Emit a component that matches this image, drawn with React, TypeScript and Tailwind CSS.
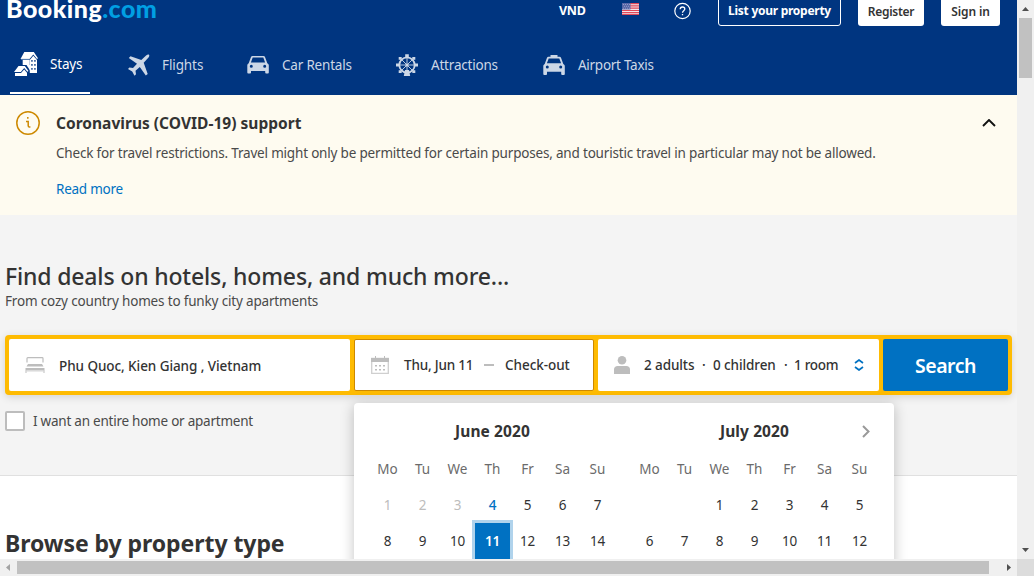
import React from "react";

const days = ["Mo", "Tu", "We", "Th", "Fr", "Sa", "Su"];

function StaysIcon() {
  return (
    <svg width="24" height="26" viewBox="0 0 24 26" fill="#fff">
      <path d="M10.300 1H19.800l4.200 6.200-1 .8-3.700-4.500L15.500 8H6.500z" />
      <path d="M8.700 8.800h7v5.200H8.700z" fill="#fff" />
      <path fillRule="evenodd" d="M19.300 4.800l3.700 4.300V22h-7.200V9.100zM17.300 9h1.300v1.800h-1.300zM20.300 9h1.300v1.800h-1.300zM17.300 13h1.300v1.800h-1.300zM20.300 13h1.300v1.800h-1.300zM17.300 17h1.300v1.800h-1.300zM20.300 17h1.300v1.800h-1.300z" />
      <path d="M12.500 14h3.500v5.500z" />
      <path d="M7 8.300h8.800" stroke="#6c90bf" strokeWidth=".8" />
      <path d="M4.500 15h6.300l3.700 5-1.100.7-3.200-3.600L6.800 21H0z" />
      <path d="M1 22h6l3.200-3.500L13 21.700V25H1z" />
    </svg>
  );
}
function FlightIcon() {
  return (
    <svg width="22" height="22" viewBox="0 0 22 22" fill="#ccd7e6">
      <path d="M20.800.5c.8.600.6 1.900-.3 3L15.700 8.800 19.700 20l-1.900 1.500-6-8.600-4.300 3.900.5 3.400-1.500 1.500-2.300-4.300L0 15l1.400-1.400 3.600.400 4-4.200L.8 4l1.700-1.700L13.300 6l4.800-4.400C19 .7 20.100.2 20.800.5z" />
    </svg>
  );
}
function CarIcon({ taxi = false }: { taxi?: boolean }) {
  return (
    <svg width="22" height="20" viewBox="0 0 22 20" fill="#ccd7e6">
      {taxi && <path d="M7.500 0h7v2h-7z" />}
      <path fillRule="evenodd" d={taxi ? "M5.500 1.800h11c.8 0 1.300.4 1.600 1.200L20.300 9c1 .6 1.500 1.300 1.500 2.300V19c0 .6-.3.900-.9.900h-1.800c-.5 0-.9-.3-.9-.9v-2.200H4V19c0 .6-.3.900-.9.900H1.200c-.6 0-.9-.3-.9-.9v-7.700c0-1 .5-1.700 1.400-2.300L3.900 3c.3-.8.8-1.200 1.600-1.200zm.2 1.700L3.900 8.200h14.200l-1.800-4.700zM4.300 10.500a1.500 1.500 0 100 3 1.500 1.500 0 000-3zm13.400 0a1.500 1.500 0 100 3 1.500 1.500 0 000-3z" : "M5.500 1.100h11c.8 0 1.300.4 1.600 1.200l2.200 6c1 .6 1.500 1.300 1.500 2.300v7c0 .6-.3.900-.9.900h-1.800c-.5 0-.9-.3-.9-.9v-1.500H4v1.500c0 .6-.3.900-.9.900H1.200c-.6 0-.9-.3-.9-.9v-7c0-1 .5-1.700 1.400-2.300l2.200-6c.3-.8.8-1.200 1.600-1.200zm.2 1.500L3.900 7.600h14.200l-1.800-5zM4.300 9.800a1.500 1.500 0 100 3 1.500 1.500 0 000-3zm13.400 0a1.500 1.500 0 100 3 1.500 1.500 0 000-3z"} />
    </svg>
  );
}
function WheelIcon() {
  return (
    <svg width="22" height="22" viewBox="0 0 22 22" fill="none" stroke="#ccd7e6">
      <circle cx="11" cy="11" r="7.700" strokeWidth="1.800" />
      <path strokeWidth=".9" d="M11 3v16M3 11h16M5.300 5.300l11.400 11.400M16.700 5.300L5.300 16.700" />
      <g fill="#ccd7e6" stroke="none">
        <circle cx="11" cy="11" r="1.600" />
        <path d="M9.200.300h3.600v3.200H9.200zM0 9.400h3.300v3.200H0zM18.700 9.400H22v3.200h-3.300zM2.700 3h3v2.800h-3zM16.300 3h3v2.800h-3zM2.700 16.200h3V19h-3zM16.300 16.200h3V19h-3zM9 16h4l1.200 6H7.800z" />
      </g>
    </svg>
  );
}
function Flag() {
  return (
    <svg width="17" height="12" viewBox="0 0 17 12">
      <path fill="#f3e4e8" d="M0 0h17v12H0z" />
      <path stroke="#e0485a" strokeWidth="1.200" d="M0 .6h17M0 2.900h17M0 5.200h17M0 7.500h17M0 9.600h17M0 11.500h17" />
      <path fill="#5866a8" d="M0 0h8.500v6.500H0z" />
      <path stroke="#a2a9d1" strokeDasharray="1 1" d="M1 1.500h7M2 3.300h6M1 5.200h7" strokeWidth=".8" />
    </svg>
  );
}
function BedIcon() {
  return (
    <svg width="20" height="16" viewBox="0 0 20 16" fill="#bdbdbd">
      <path d="M2 5.500V1.500c0-.5.3-.8.8-.8h14.400c.5 0 .8.300.8.800v4" fill="none" stroke="#bdbdbd" strokeWidth="1.200" />
      <path d="M3 7h14l1.500 2.500h-17zM.5 11h19v2.600H.5zM.5 13h1v3h-1zM18.500 13h1v3h-1z" />
      <path d="M1 14h18" stroke="#d6d6d6" />
    </svg>
  );
}
function CalendarIcon() {
  return (
    <svg width="18" height="18" viewBox="0 0 18 18" fill="#bdbdbd">
      <path d="M.7 2.500h16.600v14.800H.7z" fill="none" stroke="#cfcfcf" strokeWidth="1.300" />
      <path d="M0 2h18v4H0zM4 0h1v3H4zM13 0h1v3h-1zM4 9h2v1.500H4zM8 9h2v1.500H8zM12 9h2v1.500h-2zM4 13h2v1.500H4zM8 13h2v1.500H8zM12 13h2v1.500h-2z" />
    </svg>
  );
}

type MonthProps = { title: string; rows: string[][] };
function Month({ title, rows }: MonthProps) {
  return (
    <div className="w-[245px]">
      <h3 className="h-14 text-center text-[15.500px] font-bold leading-[56px] tracking-[0.1px] text-[#333]">{title}</h3>
      <div className="grid grid-cols-7 text-center text-[13.500px] leading-5 text-[#6b6b6b]">
        {days.map((d) => <span key={d}>{d}</span>)}
      </div>
      <div className="mt-2 grid grid-cols-7 text-center text-[13.500px] leading-9 tracking-[-0.3px] text-[#333]">
        {rows.flat().map((d, i) => {
          const june = title === "June 2020";
          if (june && d === "11") return <span key={i} className="h-9 bg-[#0071c2] font-semibold text-white outline-3 outline-[#b0d3ec]">{d}</span>;
          if (june && i < 3) return <span key={i} className="h-9 text-[#bdbdbd]">{d}</span>;
          if (june && d === "4") return <span key={i} className="h-9 font-medium text-[#0071c2]">{d}</span>;
          return <span key={i} className="h-9">{d}</span>;
        })}
      </div>
    </div>
  );
}

export default function App() {
  return (
    <div className="grid h-[576px] w-[1034px] grid-cols-[1017px_17px] grid-rows-[559px_17px] overflow-hidden bg-[#f0f0f0] font-['Noto_Sans',sans-serif] text-[#333]">
      <main className="overflow-hidden bg-white">
        <header className="h-[95px] overflow-hidden bg-[#003580] text-white">
          <div className="flex h-[34px] items-start">
            <div className="-mt-px ml-[6px] w-[553px] whitespace-nowrap font-['Lato',sans-serif] text-[25px] font-black leading-[18px] tracking-[0.47px]">
              Booking<span className="text-[#009fe3]">.com</span>
            </div>
            <span className="w-[63px] pt-px text-[12.500px] font-bold leading-5 tracking-[-0.3px]">VND</span>
            <span className="mt-[3px] w-[52px]"><Flag /></span>
            <svg className="mt-[2px]" width="17" height="18" viewBox="0 0 17 18" fill="none" stroke="#fff">
              <circle cx="8.500" cy="9" r="7.700" strokeWidth="1.200" />
              <path strokeWidth="1.300" d="M6.200 7.300c0-1.500 1-2.300 2.300-2.300s2.300.8 2.300 2c0 1.700-2.300 1.700-2.300 3.700M8.500 12v1.300" />
            </svg>
            <button className="-mt-2 ml-[27px] h-[34px] w-[123px] whitespace-nowrap rounded-[3px] border border-white pt-[4px] text-[12px] font-bold leading-4 tracking-[-0.27px]">List your property</button>
            <button className="-mt-2 ml-[17px] h-[34px] w-[66px] whitespace-nowrap rounded-[3px] bg-white pt-[6px] text-[12px] font-semibold tracking-[-0.3px] text-[#333]">Register</button>
            <button className="-mt-2 ml-[17px] h-[34px] w-[59px] whitespace-nowrap rounded-[3px] bg-white pt-[6px] text-[12px] font-semibold tracking-[-0.1px] text-[#333]">Sign in</button>
          </div>
          <nav className="flex h-[60px] whitespace-nowrap pt-px text-[13.500px] leading-[58px] tracking-[-0.2px] text-[#ccd7e6]">
            <a className="ml-[10px] flex w-[80px] items-center border-b-2 border-white pl-[4px] leading-[58px] text-white"><span className="mr-[12px]"><StaysIcon /></span>Stays</a>
            <a className="flex w-[120px] items-center pl-[38px] tracking-[-0.1px]"><span className="mr-[12px]"><FlightIcon /></span>Flights</a>
            <a className="flex w-[150px] items-center pl-[37px]"><span className="mr-[13px]"><CarIcon /></span>Car Rentals</a>
            <a className="flex w-[148px] items-center pl-[36px]"><span className="mr-[13px]"><WheelIcon /></span>Attractions</a>
            <a className="flex items-center pl-[35px] tracking-[-0.27px]"><span className="mr-[13px]"><CarIcon taxi /></span>Airport Taxis</a>
          </nav>
        </header>

        <section className="flex h-[120px] bg-[#fefbf0] pl-4">
          <svg className="mt-4" width="24" height="24" viewBox="0 0 24 24" fill="none" stroke="#cd8900" strokeWidth="1.500">
            <circle cx="12" cy="12" r="11.200" />
            <path d="M10 10.500h2.200v4.300c0 .9.400 1.300 1.200 1.300h1M11.800 6v1.800" />
          </svg>
          <div className="ml-4 w-[926px] whitespace-nowrap">
            <h2 className="mt-[16px] text-[15.500px] font-bold leading-6 tracking-[0.02px]">Coronavirus (COVID-19) support</h2>
            <p className="mt-[8px] text-[13.500px] leading-5 tracking-[-0.187px] text-[#4a4a4a]">Check for travel restrictions. Travel might only be permitted for certain purposes, and touristic travel in particular may not be allowed.</p>
            <a className="mt-4 block text-[13.500px] leading-5 tracking-[-0.25px] text-[#0071c2]">Read more</a>
          </div>
          <svg className="mt-6" width="14" height="8" viewBox="0 0 14 8" fill="none" stroke="#111" strokeWidth="1.900"><path d="M1 7l6-6 6 6" /></svg>
        </section>

        <section className="h-[261px] border-b border-[#e0e0e0] bg-[#f4f4f4] pl-[5px] pt-[43px]">
          <h1 className="whitespace-nowrap text-[23px] font-medium leading-9 tracking-[-0.16px]">Find deals on hotels, homes, and much more...</h1>
          <p className="mt-px whitespace-nowrap text-[13.500px] leading-3 tracking-[-0.17px] text-[#4a4a4a]">From cozy country homes to funky city apartments</p>
          <div className="mt-[28px] flex h-[60px] w-[1007px] gap-1 rounded-[4px] bg-[#febb02] p-1 text-[13.500px] font-medium shadow-[0_2px_8px_rgba(0,0,0,0.14)]">
            <div className="flex w-[341px] items-center whitespace-nowrap rounded-[2px] bg-white pl-4"><BedIcon /><span className="ml-[14px] pt-[2px] tracking-[-0.07px]">Phu Quoc, Kien Giang , Vietnam</span></div>
            <div className="relative flex w-[240px] items-center whitespace-nowrap rounded-[2px] border border-[#cd8900] bg-white pl-4">
              <CalendarIcon /><span className="ml-[15px] w-[80px] tracking-[-0.2px]">Thu, Jun 11</span><span className="h-[2px] w-[10px] bg-[#bdbdbd]" /><span className="ml-[11px] tracking-[-0.05px]">Check-out</span>
              <div className="absolute left-[-1px] top-[63px] z-10 flex h-[240px] w-[540px] gap-[17px] rounded-[4px] bg-white pl-4 font-normal shadow-[0_2px_14px_rgba(0,0,0,0.24)]">
                <Month title="June 2020" rows={[["1", "2", "3", "4", "5", "6", "7"], ["8", "9", "10", "11", "12", "13", "14"]]} />
                <Month title="July 2020" rows={[["", "", "1", "2", "3", "4", "5"], ["6", "7", "8", "9", "10", "11", "12"]]} />
                <svg className="absolute left-[507px] top-[22px]" width="10" height="13" viewBox="0 0 10 13" fill="none" stroke="#999" strokeWidth="2"><path d="M2 1l5.500 5.500L2 12" /></svg>
              </div>
            </div>
            <div className="flex w-[281px] items-center whitespace-nowrap rounded-[2px] bg-white pl-4">
              <svg width="16" height="18" viewBox="0 0 16 18" fill="#bdbdbd"><circle cx="8" cy="4.300" r="4.300" /><path d="M0 18v-4.500C0 11.500 1.500 10 3.500 10h9c2 0 3.500 1.500 3.500 3.500V18z" /></svg>
              <span className="ml-[14px] w-[58px] tracking-[-0.1px]">2 adults</span><span className="w-[11px]">·</span><span className="w-[71px] tracking-[-0.1px]">0 children</span><span className="w-[10px]">·</span><span className="w-[60px] tracking-[-0.3px]">1 room</span>
              <svg width="10" height="12" viewBox="0 0 10 12" fill="none" stroke="#0071c2" strokeWidth="1.700"><path d="M1 4l4-3 4 3M1 8l4 3 4-3" /></svg>
            </div>
            <button className="w-[125px] rounded-[2px] bg-[#0071c2] pt-px text-[19.500px] font-semibold tracking-[-0.5px] text-white">Search</button>
          </div>
          <label className="mt-4 flex items-center whitespace-nowrap text-[13.500px] leading-5 tracking-[-0.24px] text-[#4a4a4a]"><span className="mr-2 h-5 w-5 rounded-[2px] border-2 border-[#bdbdbd] bg-white" />I want an entire home or apartment</label>
        </section>
        <h2 className="ml-[5px] mt-[49px] text-[23px] font-bold leading-9 tracking-[-0.06px]">Browse by property type</h2>
      </main>
      <aside className="flex flex-col items-center bg-[#f0f0f0]">
        <svg className="mt-[7px]" width="7" height="4" viewBox="0 0 7 4" fill="#505050"><path d="M0 4l3.500-4L7 4z" /></svg>
        <div className="mt-[7px] h-[60px] w-[13px] bg-[#c1c1c1]" />
        <svg className="mt-auto mb-[7px]" width="7" height="4" viewBox="0 0 7 4" fill="#505050"><path d="M0 0l3.500 4L7 0z" /></svg>
      </aside>
      <footer className="flex items-center bg-[#f0f0f0]">
        <svg className="ml-[6px]" width="4" height="7" viewBox="0 0 4 7" fill="#a3a3a3"><path d="M4 0L0 3.500 4 7z" /></svg>
        <div className="ml-[7px] h-[13px] w-[972px] bg-[#c1c1c1]" />
        <svg className="ml-[18px]" width="4" height="7" viewBox="0 0 4 7" fill="#505050"><path d="M0 0l4 3.500L0 7z" /></svg>
      </footer>
      <div className="bg-[#dcdcdc]" />
    </div>
  );
}
